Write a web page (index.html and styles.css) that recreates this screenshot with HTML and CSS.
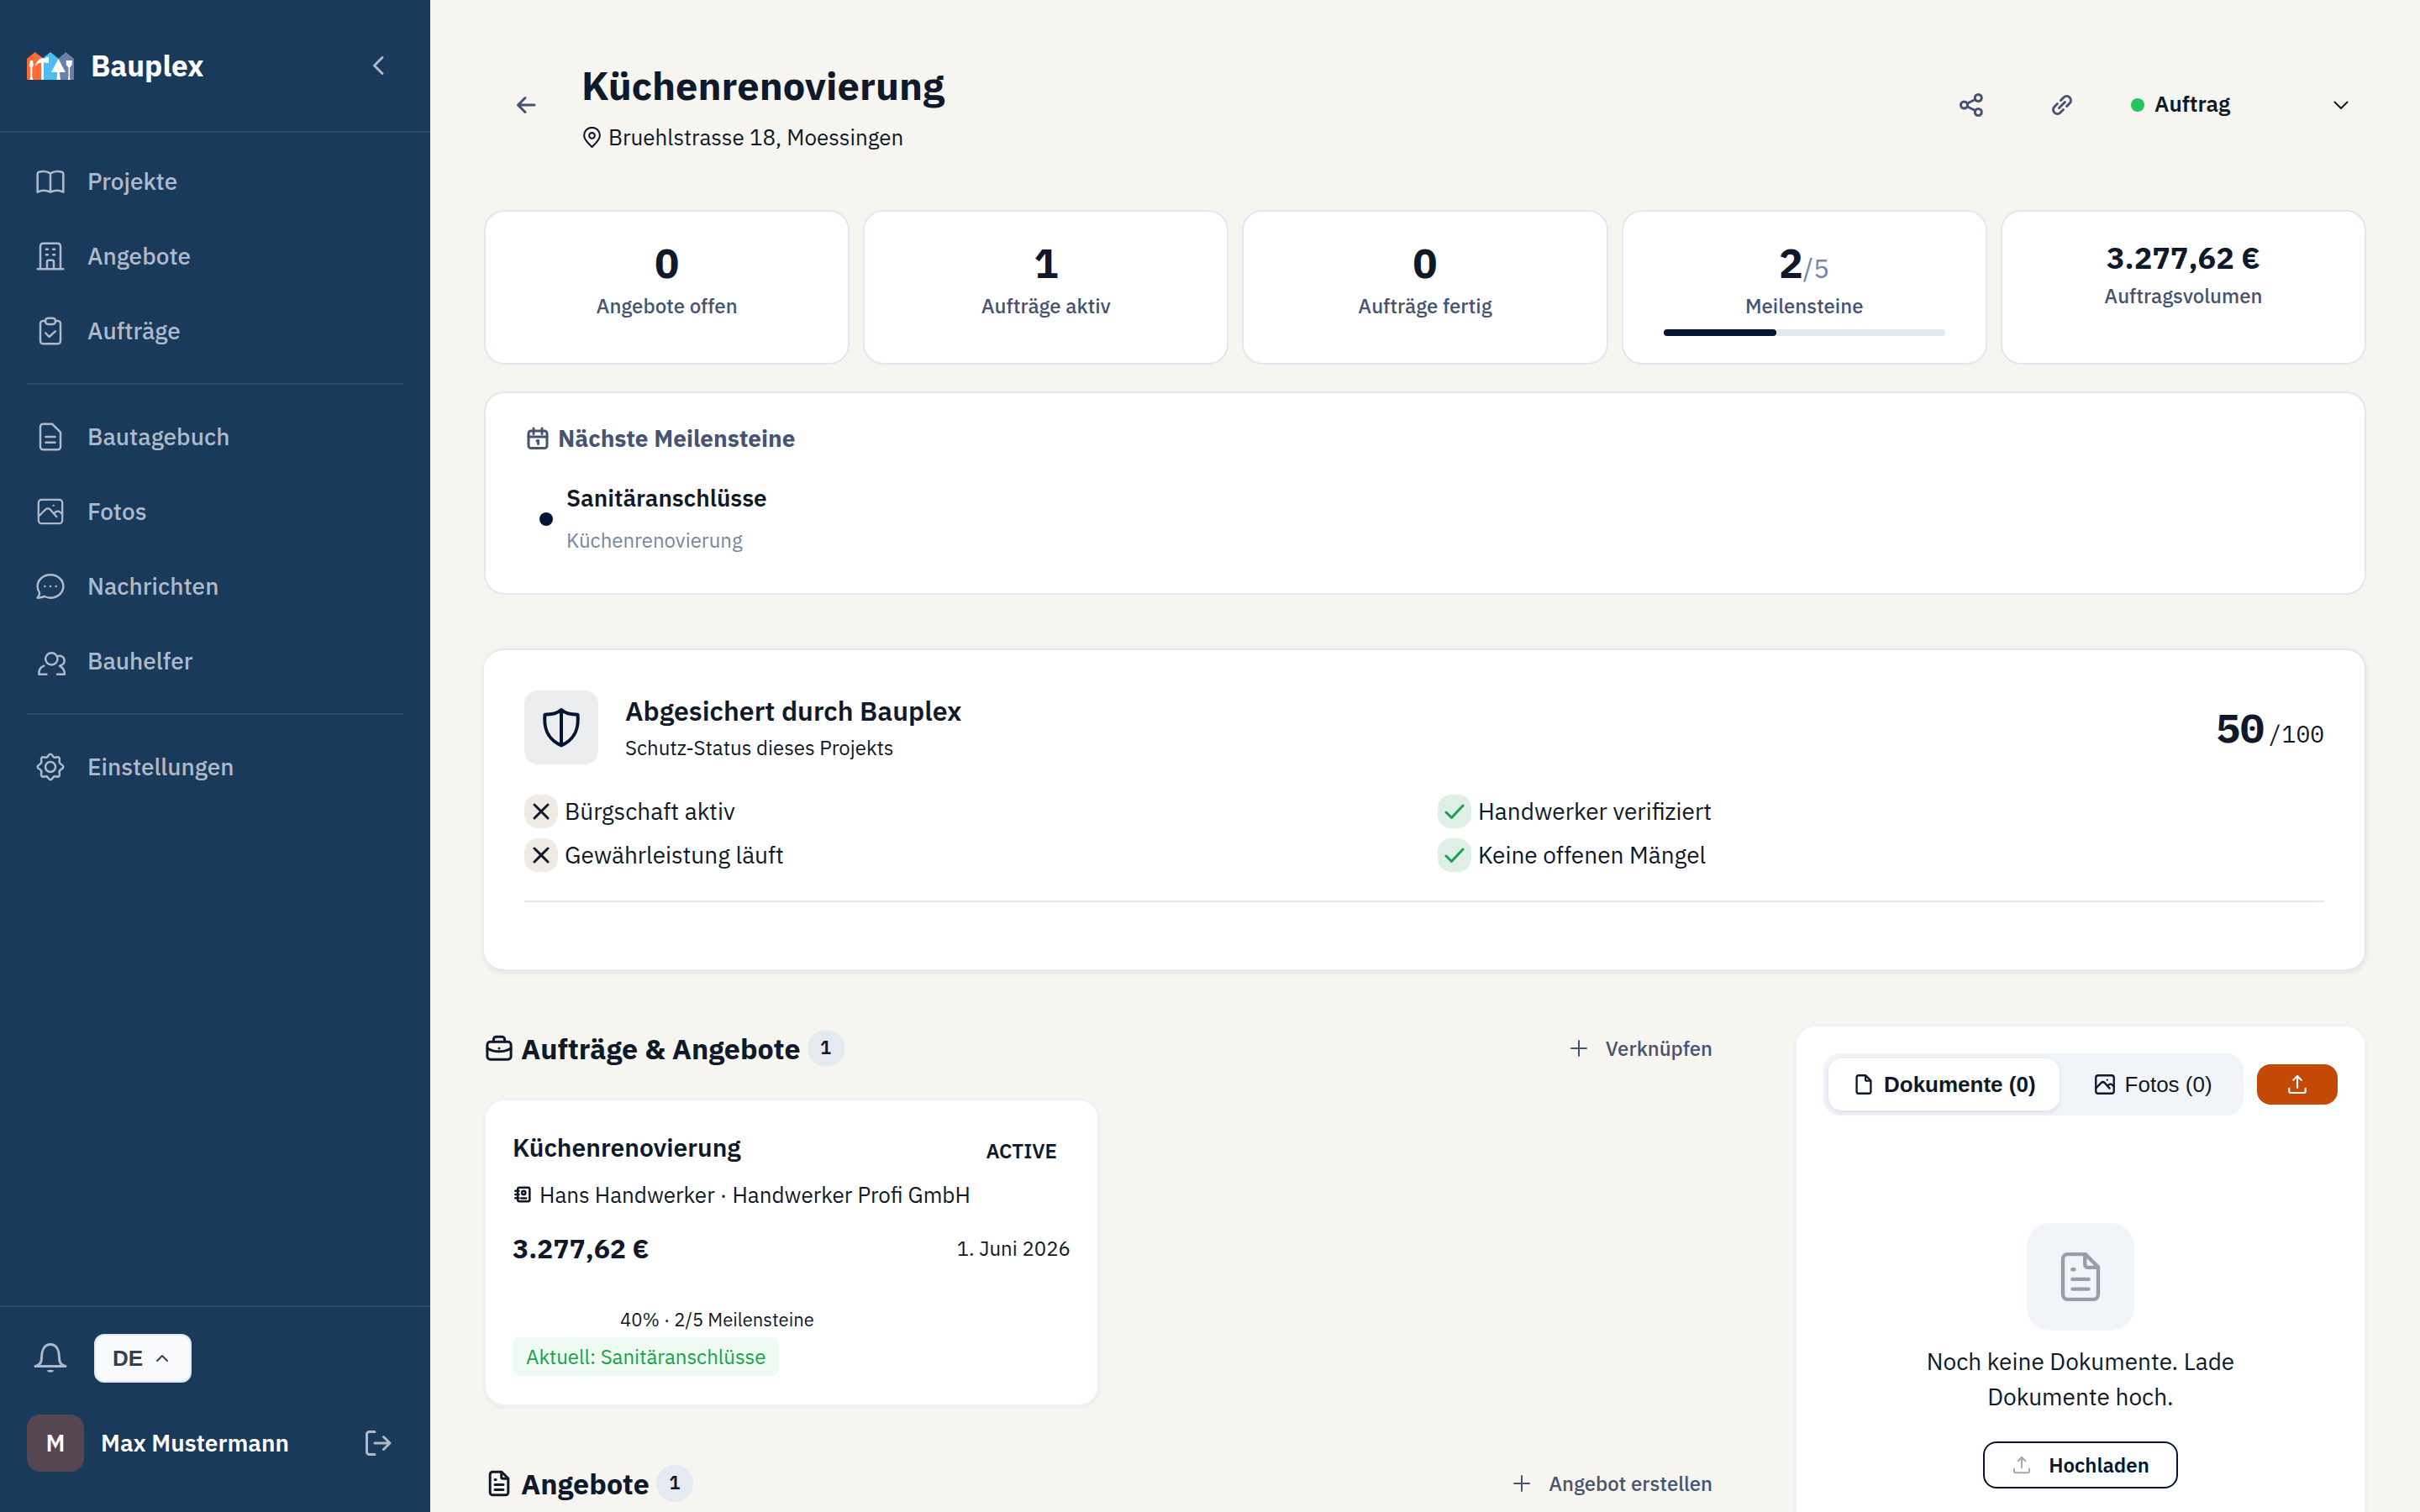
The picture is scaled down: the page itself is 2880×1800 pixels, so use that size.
FILE: index.html
```html
<!DOCTYPE html>
<html lang="de">
<head>
<meta charset="utf-8">
<meta name="viewport" content="width=device-width, initial-scale=1">
<title>Küchenrenovierung – Bauplex</title>
<link rel="stylesheet" href="styles.css">
</head>
<body>
<svg class="sprite" aria-hidden="true">
  <symbol id="i-image" viewBox="0 0 24 24"><rect x="2.8" y="2.8" width="18.4" height="18.4" rx="2.4"/><path d="M3 15.6l5.2-5.2c1-1 2.600-1 3.600 0l5 5.600M15 13.400c1.200-1.900 3.400-2.200 4.600-.9l1.400 1.400"/><path class="dot" d="M14.400 7.400h.01"/></symbol>
  <symbol id="i-doc" viewBox="0 0 24 24"><path d="M14 2.800H6.800a2 2 0 0 0-2 2v14.400a2 2 0 0 0 2 2h10.400a2 2 0 0 0 2-2V8zM13.800 3v4a1.200 1.200 0 0 0 1.200 1.200h4M8.700 9h.7M8.700 13h6.600M8.700 17h6.600"/></symbol>
  <symbol id="i-plus" viewBox="0 0 24 24"><path d="M12 3v18M3 12h18"/></symbol>
  <symbol id="i-upload" viewBox="0 0 24 24"><path d="M12 15.500V3.200M7.600 7.200L12 2.800l4.400 4.400M3 16.500v2.700a2 2 0 0 0 2 2h14a2 2 0 0 0 2-2v-2.700"/></symbol>
  <symbol id="i-cross" viewBox="0 0 24 24"><path d="M4 4l16 16M20 4L4 20"/></symbol>
  <symbol id="i-check" viewBox="0 0 24 24"><path d="M2 13l6.500 6.500L22 5"/></symbol>
</svg>

<div class="shell">
  <aside class="sidebar">
    <header class="brand">
      <svg class="logo" viewBox="0 0 56 33" aria-hidden="true">
        <path fill="#ff6b35" d="M0 8L9.500 0 19 7v26H0z"/>
        <path fill="#4dbdee" d="M18 8l10-8 10 8v25H18z"/>
        <path fill="#6b7fab" d="M37 8l9.500-8L56 8v25H37z"/>
        <path fill="#fff" d="M4 10h3l.8 5.500-1.500 3.500v11l1.200 3H3.300l1-3V19L2.800 15.500zM10 17c.5-5 4-9.500 9-9.800l2 .8 1.500-1.800H26V13h-3.500L21 12l-1 1v20h-3V13c-3-.5-5 1-7 4zM37.500 8L46 24h-6.800v3.500l.8 5.500h-4.500l.5-5.500V24H29zM46.500 10h7.500l-.5 5.500-2.500 3v11l.7 3.500h-2.900l.7-3.500v-11l-2.500-3z"/>
      </svg>
      <span class="brand-name">Bauplex</span>
      <button class="collapse" type="button" aria-label="Seitenleiste einklappen"><svg class="stroke" viewBox="0 0 16 24"><path d="M13 2.500L3.500 12l9.500 9.500"/></svg></button>
    </header>

    <nav class="nav" aria-label="Hauptnavigation">
      <div class="nav-group">
        <a href="#"><svg viewBox="0 0 24 24"><path d="M12 6.200c-1.500-.9-3.100-1.400-4.800-1.400-1.500 0-2.700.2-3.700.6-.4.100-.7.500-.7.900v13.300c1.400-.7 2.900-1.100 4.400-1.100 1.700 0 3.300.4 4.800 1.100 1.500-.7 3.100-1.100 4.800-1.100 1.500 0 3 .4 4.400 1.100V6.300c0-.4-.3-.8-.7-.9-1-.4-2.200-.6-3.700-.6-1.700 0-3.300.5-4.800 1.400zV19.600"/></svg>Projekte</a>
        <a href="#"><svg viewBox="0 0 24 24"><path d="M2.800 21.200h18.400M4.800 21V4.800a2 2 0 0 1 2-2h10.400a2 2 0 0 1 2 2V21M9.600 21v-5a1.200 1.200 0 0 1 1.200-1.200h2.400a1.200 1.200 0 0 1 1.200 1.200v5M8.900 7h1.200M13.900 7h1.200M8.900 10.900h1.200M13.900 10.900h1.200"/></svg>Angebote</a>
        <a href="#"><svg viewBox="0 0 24 24"><path d="M8.400 4.800H6.800a2 2 0 0 0-2 2v12.400a2 2 0 0 0 2 2h10.400a2 2 0 0 0 2-2V6.800a2 2 0 0 0-2-2h-1.600M8.600 13.500l2.500 2.700 4.400-4"/><rect x="8.400" y="2.800" width="7.200" height="4.400" rx="2"/></svg>Aufträge</a>
      </div>
      <hr>
      <div class="nav-group">
        <a href="#"><svg viewBox="0 0 24 24"><path d="M13.200 2.800H6.800a2 2 0 0 0-2 2v14.400a2 2 0 0 0 2 2h10.400a2 2 0 0 0 2-2V8.800zM8.700 12h6.600M8.700 16h6.600"/></svg>Bautagebuch</a>
        <a href="#"><svg viewBox="-1 -1 26 26"><use href="#i-image" width="24" height="24"/></svg>Fotos</a>
        <a href="#"><svg viewBox="0 0 24 24"><path d="M12 3.800c5.100 0 9.200 3.600 9.200 8.200s-4.100 8.200-9.200 8.200c-1.500 0-3-.4-4.200-1-1.300.5-2.800 1-5 1 1-1.300 1.600-2.600 1.400-3.700-.9-1.300-1.400-2.900-1.400-4.500 0-4.600 4.100-8.200 9.200-8.200z"/><path class="dot" d="M8 12h.01M12 12h.01M16 12h.01"/></svg>Nachrichten</a>
        <a href="#"><svg viewBox="0 -2 24 24"><circle cx="12.800" cy="8.400" r="4.300"/><path d="M17 6.600c2.600-.9 5 .6 5 3.200 0 1.700-1.400 3-3.400 3.600 2.200 1.300 3.600 3.300 3.600 6h-5.400M9.200 19.400H3.800c-.2-3 1.200-5.100 3.600-6"/></svg>Bauhelfer</a>
      </div>
      <hr>
      <div class="nav-group">
        <a href="#"><svg viewBox="0 0 24 24"><circle cx="12" cy="12" r="3.600"/><path d="M12 2.800c1.500 0 1.400 1.800 2.600 2.300s2.500-.8 3.600.3-.3 2.300.3 3.600 2.700 1.400 2.700 3-2.100 1.400-2.700 2.900.8 2.600-.3 3.700-2.300-.2-3.600.3-1.200 2.300-2.600 2.300-1.400-1.800-2.600-2.300-2.500.8-3.600-.3.200-2.200-.3-3.700-2.700-1.400-2.700-2.900 2.100-1.600 2.700-3-.8-2.500.3-3.600 2.300.2 3.600-.3 1.200-2.300 2.600-2.300z"/></svg>Einstellungen</a>
      </div>
    </nav>

    <footer class="side-foot">
      <div class="foot-row">
        <button class="bell" type="button" aria-label="Benachrichtigungen"><svg class="stroke" viewBox="0 0 40 40"><path d="M2 29.500c6-1 7.500-5 7.500-10C9.500 12 12 3.500 20 3.500S30.500 12 30.500 19.500c0 5 1.500 9 7.500 10z"/><path class="solid" d="M16 34.500c2.500-1 5.500-1 8 0-.5 3-7.500 3-8 0z"/></svg></button>
        <label class="lang">
          <select aria-label="Sprache"><option>DE</option></select>
          <svg class="stroke" viewBox="0 0 16 16"><path d="M2 11l6-6 6 6"/></svg>
        </label>
      </div>
      <div class="foot-row user">
        <span class="avatar">M</span>
        <span class="user-name">Max Mustermann</span>
        <button class="logout" type="button" aria-label="Abmelden"><svg class="stroke" viewBox="0 0 32 32"><path d="M12 2.500H5.500a3 3 0 0 0-3 3v21a3 3 0 0 0 3 3H12M12 16h18M22.500 8.500L30 16l-7.500 7.500"/></svg></button>
      </div>
    </footer>
  </aside>

  <main class="main">
    <header class="page-head">
      <button class="icon-btn" type="button" aria-label="Zurück"><svg class="stroke" viewBox="0 0 24 24"><path d="M22 12H2.500M11 3.500L2.500 12l8.500 8.500"/></svg></button>
      <div class="page-title">
        <h1>Küchenrenovierung</h1>
        <p><svg class="stroke" viewBox="0 0 24 24"><path d="M12 23c-4-4-9-8-9-13.200a9 9 0 0 1 18 0C21 15 16 19 12 23z"/><circle cx="12" cy="10" r="3.200"/></svg>Bruehlstrasse 18, Moessingen</p>
      </div>
      <div class="actions">
        <button class="icon-btn" type="button" aria-label="Teilen"><svg class="stroke share" viewBox="0 0 28 28"><circle cx="5.500" cy="14" r="4"/><circle cx="22.300" cy="5.500" r="4"/><circle cx="22.300" cy="22.500" r="4"/><path d="M9.500 12l9-4.500M9.500 16l9 4.500"/></svg></button>
        <button class="icon-btn" type="button" aria-label="Link kopieren"><svg class="stroke" viewBox="0 0 24 24"><path d="M8.500 15.500l7-7M10.500 6.500L14 3a4.900 4.900 0 0 1 7 7l-3.500 3.500M13.500 17.500L10 21a4.900 4.900 0 0 1-7-7l3.500-3.500"/></svg></button>
        <label class="status">
          <span class="status-dot"></span>
          <select aria-label="Projektstatus"><option>Auftrag</option></select>
          <svg class="stroke" viewBox="0 0 24 24"><path d="M4.500 8.500L12 16l7.500-7.500"/></svg>
        </label>
      </div>
    </header>

    <section class="stats" aria-label="Kennzahlen">
      <div class="stat"><strong>0</strong><span>Angebote offen</span></div>
      <div class="stat"><strong>1</strong><span>Aufträge aktiv</span></div>
      <div class="stat"><strong>0</strong><span>Aufträge fertig</span></div>
      <div class="stat"><strong>2<small>/5</small></strong><span>Meilensteine</span><div class="bar"><div class="bar-fill" style="width:40%"></div></div></div>
      <div class="stat stat-money"><strong>3.277,62 €</strong><span>Auftragsvolumen</span></div>
    </section>

    <section class="milestones">
      <h2><svg class="stroke" viewBox="0 0 28 28"><rect x="3" y="5" width="22" height="20.500" rx="3"/><path d="M3 12h22M9 2v6.500M19 2v6.500M13 17l1.500-.5v4"/></svg>Nächste Meilensteine</h2>
      <div class="milestone">
        <span class="milestone-dot"></span>
        <div><strong>Sanitäranschlüsse</strong><span>Küchenrenovierung</span></div>
      </div>
    </section>

    <section class="shield-card">
      <header>
        <span class="shield"><svg viewBox="0 0 48 48"><path d="M24 3c-5 4.500-11 5.700-19.500 5.700C3 25 7 38 24 45.500 41 38 45 25 43.500 8.700 35 8.700 29 7.500 24 3zM24 3v42"/></svg></span>
        <div class="shield-title"><h2>Abgesichert durch Bauplex</h2><p>Schutz-Status dieses Projekts</p></div>
        <div class="score"><strong>50</strong><span>/100</span></div>
      </header>
      <ul class="checks">
        <li><span class="mark"><svg><use href="#i-cross"/></svg></span>Bürgschaft aktiv</li>
        <li><span class="mark ok"><svg><use href="#i-check"/></svg></span>Handwerker verifiziert</li>
        <li><span class="mark"><svg><use href="#i-cross"/></svg></span>Gewährleistung läuft</li>
        <li><span class="mark ok"><svg><use href="#i-check"/></svg></span>Keine offenen Mängel</li>
      </ul>
      <hr>
    </section>

    <div class="columns">
      <div class="left">
        <section>
          <header class="section-head">
            <svg class="stroke" viewBox="0 0 24 24"><rect x="2.600" y="6.800" width="18.800" height="14" rx="2.400"/><path d="M7.600 6.600V5a2.200 2.200 0 0 1 2.200-2.200h4.400A2.200 2.200 0 0 1 16.400 5v1.600M2.600 12c5.500 3.400 13.300 3.400 18.800 0M12 12h.01"/></svg>
            <h2>Aufträge &amp; Angebote</h2><span class="count">1</span>
            <button class="text-btn" type="button"><svg><use href="#i-plus"/></svg>Verknüpfen</button>
          </header>
          <div class="orders">
            <article class="order">
              <div class="order-top"><h3>Küchenrenovierung</h3><span class="state">ACTIVE</span></div>
              <p class="order-who"><svg class="stroke" viewBox="0 0 24 24"><rect x="5" y="2" width="17" height="20" rx="2.500"/><path d="M1.500 7h5M1.500 12h5M1.500 17h5M10 17.500h7"/><circle cx="13.500" cy="9.500" r="2.500"/></svg>Hans Handwerker · Handwerker Profi GmbH</p>
              <div class="order-sum"><strong>3.277,62 €</strong><time datetime="2026-06-01">1. Juni 2026</time></div>
              <p class="order-progress">40% · 2/5 Meilensteine</p>
              <span class="tag">Aktuell: Sanitäranschlüsse</span>
            </article>
          </div>
        </section>
        <section>
          <header class="section-head">
            <svg class="stroke"><use href="#i-doc"/></svg>
            <h2>Angebote</h2><span class="count">1</span>
            <button class="text-btn" type="button"><svg><use href="#i-plus"/></svg>Angebot erstellen</button>
          </header>
        </section>
      </div>

      <aside class="files">
        <div class="files-bar">
          <div class="tabs" role="tablist">
            <button class="tab active" type="button" role="tab" aria-selected="true"><svg class="stroke" viewBox="0 0 24 24"><path d="M14 2.800H6.800a2 2 0 0 0-2 2v14.400a2 2 0 0 0 2 2h10.400a2 2 0 0 0 2-2V8zM13.800 3v4a1.200 1.200 0 0 0 1.200 1.200h4"/></svg>Dokumente (0)</button>
            <button class="tab" type="button" role="tab" aria-selected="false"><svg class="stroke"><use href="#i-image"/></svg>Fotos (0)</button>
          </div>
          <button class="upload" type="button" aria-label="Hochladen"><svg class="stroke"><use href="#i-upload"/></svg></button>
        </div>
        <div class="empty">
          <span class="empty-icon"><svg><use href="#i-doc"/></svg></span>
          <p>Noch keine Dokumente. Lade Dokumente hoch.</p>
          <button class="outline-btn" type="button"><svg><use href="#i-upload"/></svg>Hochladen</button>
        </div>
      </aside>
    </div>
  </main>
</div>
</body>
</html>
```
FILE: styles.css
```css
:root {
  --navy: #1a3a5c;
  --ink: #0f1929;
  --slate: #475372;
  --muted: #7786a3;
  --line: #e2e8f0;
  --soft: #f1f4f9;
  --deep: #071535;
  --sans: "IBM Plex Sans", "Noto Sans", sans-serif;
}
* { box-sizing: border-box; }
body {
  margin: 0;
  background: #f6f5f0;
  color: var(--ink);
  font: 400 28px/40px var(--sans);
}
h1, h2, h3, p, ul { margin: 0; padding: 0; }
button, select {
  font: inherit;
  color: inherit;
  background: none;
  border: 0;
  padding: 0;
  cursor: pointer;
}
select { appearance: none; }
hr { border: 0; border-top: 2px solid var(--line); margin: 0; }
svg { flex: none; display: block; fill: none; stroke: currentColor; stroke-width: 2; stroke-linecap: round; stroke-linejoin: round; }
.sprite { position: absolute; width: 0; height: 0; }
.solid { fill: currentColor; stroke: none; }

.shell { display: flex; height: 100vh; }

/* Sidebar */
.sidebar {
  flex: 0 0 512px;
  display: flex;
  flex-direction: column;
  background: var(--navy);
  color: #b0b9c8;
}
.brand {
  display: flex;
  align-items: center;
  padding: 50px 48px 50px 32px;
  border-bottom: 2px solid #2b4a66;
}
.logo { width: 56px; height: 33px; stroke: none; }
.brand-name {
  margin-left: 20px;
  color: #fff;
  font-size: 35px;
  font-weight: 700;
  line-height: 56px;
}
.collapse { margin-left: auto; }
.collapse svg { width: 28px; height: 24px; stroke-width: 3; }
.nav { flex: 1; padding: 16px 32px; }
.nav hr { margin: 20px 0; border-color: #2b4a66; }
.nav-group { display: flex; flex-direction: column; gap: 5px; }
.nav a {
  display: flex;
  align-items: center;
  gap: 24px;
  height: 84px;
  padding: 0 8px;
  color: inherit;
  font-weight: 500;
  text-decoration: none;
}
.nav svg { width: 40px; height: 40px; stroke-width: 1.5; }
.side-foot { padding: 32px; border-top: 2px solid #2b4a66; }
.foot-row { display: flex; align-items: center; height: 58px; }
.bell { margin: 0 32px 0 8px; }
.bell svg { width: 40px; height: 40px; stroke-width: 3; }
.lang {
  display: grid;
  align-items: center;
  width: 116px;
  height: 58px;
  border: 2px solid var(--line);
  border-radius: 12px;
  background: #f8fafc;
  color: #334155;
}
.lang > * { grid-area: 1 / 1; }
.lang select {
  width: 100%;
  height: 100%;
  padding-left: 20px;
  font: 700 26px/32px "Liberation Sans", Arial, sans-serif;
}
.lang svg { justify-self: end; width: 16px; height: 16px; margin-right: 25px; pointer-events: none; }
.user { height: 68px; margin: 38px 0 16px; color: #fff; font-weight: 600; }
.avatar {
  width: 68px;
  height: 68px;
  border-radius: 16px;
  background: #554652;
  line-height: 68px;
  text-align: center;
}
.user-name { margin-left: 20px; }
.logout { margin: 0 14px 0 auto; color: #b0b9c8; }
.logout svg { width: 32px; height: 32px; stroke-width: 3; }

/* Page */
.main { flex: 1; min-width: 0; padding: 68px 64px; overflow-y: auto; scrollbar-width: none; }
.page-head { display: flex; align-items: center; margin-bottom: 68px; }
.icon-btn { display: grid; place-items: center; width: 100px; height: 64px; color: var(--slate); }
.icon-btn svg { width: 24px; height: 24px; stroke-width: 3; }
.icon-btn .share { width: 28px; height: 28px; }
.page-title { margin-left: 16px; }
.page-title h1 { font-size: 47px; font-weight: 700; line-height: 68px; }
.page-title p {
  display: flex;
  align-items: center;
  gap: 7px;
  margin-top: 8px;
  font-size: 26px;
  line-height: 38px;
}
.page-title p svg { width: 25px; height: 25px; }
.actions { display: flex; align-items: center; gap: 8px; margin-left: auto; }
.status { display: grid; grid-template-columns: auto 1fr; align-items: center; gap: 12px; width: 304px; height: 64px; padding: 0 18px 0 24px; }
.status-dot { width: 16px; height: 16px; border-radius: 50%; background: #22c55e; }
.status select { grid-area: 1 / 2; height: 44px; padding-bottom: 4px; font-size: 26px; font-weight: 600; text-align: left; }
.status svg { grid-area: 1 / 2; justify-self: end; width: 24px; height: 24px; pointer-events: none; }

.stats { display: grid; grid-template-columns: repeat(5, 1fr); gap: 16px; }
.stat, .milestones {
  background: #fff;
  border: 2px solid var(--line);
  border-radius: 24px;
}
.stat { padding: 32px 48px; text-align: center; }
.stat strong { display: block; font-size: 48px; font-weight: 700; line-height: 58px; }
.stat small { color: var(--muted); font-size: 32px; font-weight: 400; line-height: 32px; }
.stat > span { display: block; margin-top: 4px; color: var(--slate); font-size: 24px; font-weight: 500; line-height: 36px; }
.stat-money strong { font-size: 36px; line-height: 46px; }
.bar { height: 8px; margin-top: 10px; border-radius: 4px; background: var(--line); }
.bar-fill { height: 100%; border-radius: 4px; background: var(--deep); }

.milestones { margin-top: 32px; padding: 32px 48px 38px; }
.milestones h2 { display: flex; align-items: center; gap: 10px; color: var(--slate); font-size: 28px; font-weight: 700; line-height: 44px; }
.milestones h2 svg { width: 28px; height: 28px; stroke-width: 3; }
.milestone { display: flex; align-items: center; gap: 16px; margin-top: 24px; padding-left: 16px; }
.milestone-dot { width: 16px; height: 16px; border-radius: 50%; background: var(--deep); }
.milestone strong, .milestone div span { display: block; line-height: 50px; }
.milestone strong { font-weight: 600; }
.milestone div span { color: var(--muted); font-size: 24px; }

.shield-card {
  margin-top: 64px;
  padding: 48px 48px 80px;
  background: #fff;
  border: 2px solid var(--line);
  border-left: 0;
  border-radius: 24px;
  box-shadow: 0 2px 6px rgba(15, 25, 41, .08);
}
.shield-card header { display: flex; align-items: center; }
.shield { display: grid; place-items: center; width: 88px; height: 88px; border-radius: 16px; background: #ecedef; color: var(--deep); }
.shield svg { width: 48px; height: 48px; stroke-width: 4; }
.shield-title { margin-left: 32px; }
.shield-title h2 { font-size: 32px; font-weight: 600; line-height: 48px; }
.shield-title p { font-size: 24px; line-height: 40px; }
.score { display: flex; align-items: baseline; gap: 4px; margin-left: auto; font-family: "IBM Plex Mono", "Liberation Mono", monospace; font-size: 28px; }
.score strong { font-size: 48px; font-weight: 700; line-height: 64px; }
.checks { display: grid; grid-template-columns: 1fr 1fr; gap: 12px 32px; margin: 36px 0 34px; list-style: none; }
.checks li { display: flex; align-items: center; gap: 8px; }
.mark { display: grid; place-items: center; width: 40px; height: 40px; border-radius: 16px; background: #efebe4; }
.mark svg { width: 24px; height: 24px; stroke-width: 3; }
.mark.ok { background: #def0e5; color: #1d9f52; }

/* Orders and files */
.columns { display: grid; grid-template-columns: 11fr 5fr; gap: 64px; margin-top: 64px; }
.left { display: flex; flex-direction: column; gap: 64px; min-width: 0; }
.section-head { display: flex; align-items: center; gap: 8px; height: 56px; }
.section-head > svg { width: 36px; height: 36px; }
.section-head h2 { font-size: 34px; font-weight: 700; line-height: 48px; }
.count { width: 44px; height: 44px; border-radius: 50%; background: #e5e9f1; font-size: 22px; font-weight: 600; line-height: 42px; text-align: center; }
.text-btn { display: flex; align-items: center; gap: 20px; margin-left: auto; padding-right: 34px; color: var(--slate); font-size: 24px; font-weight: 500; }
.text-btn svg { width: 24px; height: 24px; }
.orders { display: grid; grid-template-columns: 1fr 1fr; gap: 32px; margin-top: 32px; }
.order, .files {
  padding: 32px;
  background: #fff;
  border: 2px solid #eef1f7;
  border-radius: 24px;
  box-shadow: 0 2px 4px rgba(15, 25, 41, .05);
}
.order { padding-bottom: 34px; }
.order-top, .order-sum { display: flex; align-items: flex-end; justify-content: space-between; }
.order h3 { font-size: 30px; font-weight: 600; line-height: 48px; }
.state { padding-right: 16px; font-size: 24px; font-weight: 600; }
.order-who { display: flex; align-items: center; gap: 8px; margin-top: 12px; font-size: 26px; }
.order-who svg { width: 24px; height: 20px; stroke-width: 3; }
.order-sum { align-items: center; margin-top: 22px; line-height: 44px; }
.order-sum strong { font-size: 32px; font-weight: 700; }
.order-sum time { font-size: 24px; }
.order-progress { margin-top: 46px; padding-left: 128px; font-size: 22px; line-height: 34px; }
.tag { display: block; width: fit-content; margin-top: 4px; padding: 0 16px; border-radius: 8px; background: #eefaf2; color: #16a34a; font-size: 24px; line-height: 46px; }

.files-bar { display: flex; align-items: center; gap: 16px; }
.tabs { flex: 1; display: flex; gap: 12px; padding: 6px; border-radius: 20px; background: var(--soft); }
.tab { display: flex; align-items: center; gap: 10px; height: 62px; padding: 0 28px; border-radius: 16px; font: 400 26px/32px "Liberation Sans", Arial, sans-serif; white-space: nowrap; }
.tab.active { background: #fff; font-weight: 700; box-shadow: 0 2px 6px rgba(15, 25, 41, .1); }
.tab svg { width: 28px; height: 28px; }
.upload { display: grid; place-items: center; width: 96px; height: 48px; border-radius: 16px; background: #c24a06; color: #fff; }
.upload svg { width: 26px; height: 26px; }
.empty { display: flex; flex-direction: column; align-items: center; padding: 128px 0 160px; text-align: center; }
.empty-icon { display: grid; place-items: center; width: 128px; height: 128px; border-radius: 28px; background: var(--soft); color: #969ea8; }
.empty-icon svg { width: 70px; height: 70px; stroke-width: 1.5; }
.empty p { max-width: 400px; margin: 16px 0 32px; line-height: 42px; }
.outline-btn { display: flex; align-items: center; gap: 20px; height: 56px; padding: 0 32px; border: 2px solid var(--deep); border-radius: 16px; color: var(--deep); font-size: 24px; font-weight: 600; }
.outline-btn svg { width: 24px; height: 24px; color: #a3aab5; }
```
